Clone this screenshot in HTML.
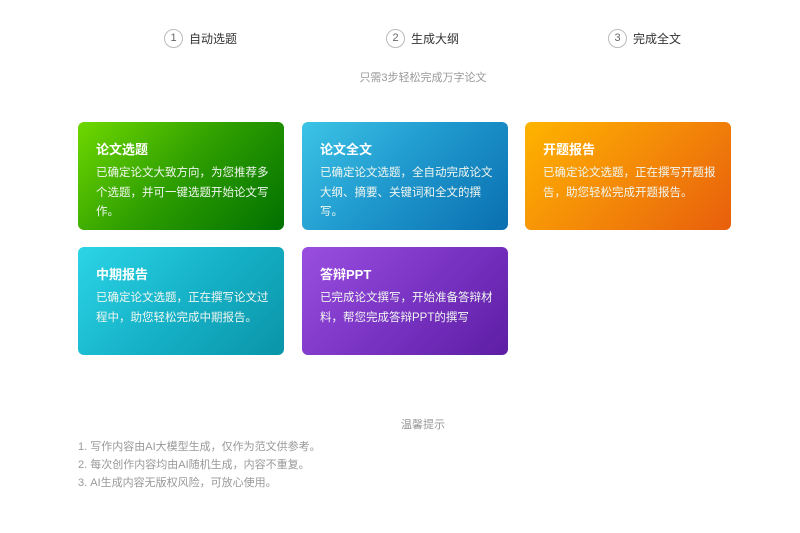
<!DOCTYPE html>
<html><head><meta charset="utf-8"><style>
body{margin:0;width:800px;height:533px;background:#fff;font-family:"Liberation Sans","Noto Sans CJK SC",sans-serif;position:relative;overflow:hidden}
.step{position:absolute;top:28px;height:20px;display:flex;align-items:center;font-size:12px;color:#333}
.step i{font-style:normal;width:17px;height:17px;border:1px solid #bbb;border-radius:50%;display:inline-flex;align-items:center;justify-content:center;font-size:11px;color:#666;margin-right:6px}
.sub{position:absolute;top:69px;left:0;width:846px;text-align:center;font-size:11px;color:#999}
.card{position:absolute;width:206px;height:108px;border-radius:6px;color:#fff;box-sizing:border-box;padding:20px 8px 0 18px}
.card h3{margin:0 0 6px;font-size:13px;font-weight:bold;line-height:16px}
.card p{margin:0;font-size:11.5px;line-height:19.5px;color:#f0f6f0}
.tip{position:absolute;top:416px;left:0;width:846px;text-align:center;font-size:11px;color:#999}
.list{position:absolute;top:438px;left:78px;font-size:11px;color:#999;line-height:18px}
</style></head><body>
<div class="step" style="left:164px"><i>1</i>自动选题</div>
<div class="step" style="left:386px"><i>2</i>生成大纲</div>
<div class="step" style="left:608px"><i>3</i>完成全文</div>
<div class="sub">只需3步轻松完成万字论文</div>
<div class="card" style="left:78px;top:122px;background:linear-gradient(135deg,#6fd800,#2d9d00 50%,#007000)"><h3>论文选题</h3><p>已确定论文大致方向，为您推荐多个选题，并可一键选题开始论文写作。</p></div>
<div class="card" style="left:302px;top:122px;background:linear-gradient(135deg,#3cc4e6,#1e96cc 50%,#0a6fb0)"><h3>论文全文</h3><p>已确定论文选题，全自动完成论文大纲、摘要、关键词和全文的撰写。</p></div>
<div class="card" style="left:525px;top:122px;background:linear-gradient(135deg,#ffb400,#f48a08 50%,#e85e0c)"><h3>开题报告</h3><p>已确定论文选题，正在撰写开题报告，助您轻松完成开题报告。</p></div>
<div class="card" style="left:78px;top:247px;background:linear-gradient(135deg,#2cd5e6,#16b2c8 50%,#0a94a8)"><h3>中期报告</h3><p>已确定论文选题，正在撰写论文过程中，助您轻松完成中期报告。</p></div>
<div class="card" style="left:302px;top:247px;background:linear-gradient(135deg,#9a4ee0,#7a34c4 50%,#5e1ea4)"><h3>答辩PPT</h3><p>已完成论文撰写，开始准备答辩材料，帮您完成答辩PPT的撰写</p></div>
<div class="tip">温馨提示</div>
<div class="list">1. 写作内容由AI大模型生成，仅作为范文供参考。<br>2. 每次创作内容均由AI随机生成，内容不重复。<br>3. AI生成内容无版权风险，可放心使用。</div>
</body></html>
